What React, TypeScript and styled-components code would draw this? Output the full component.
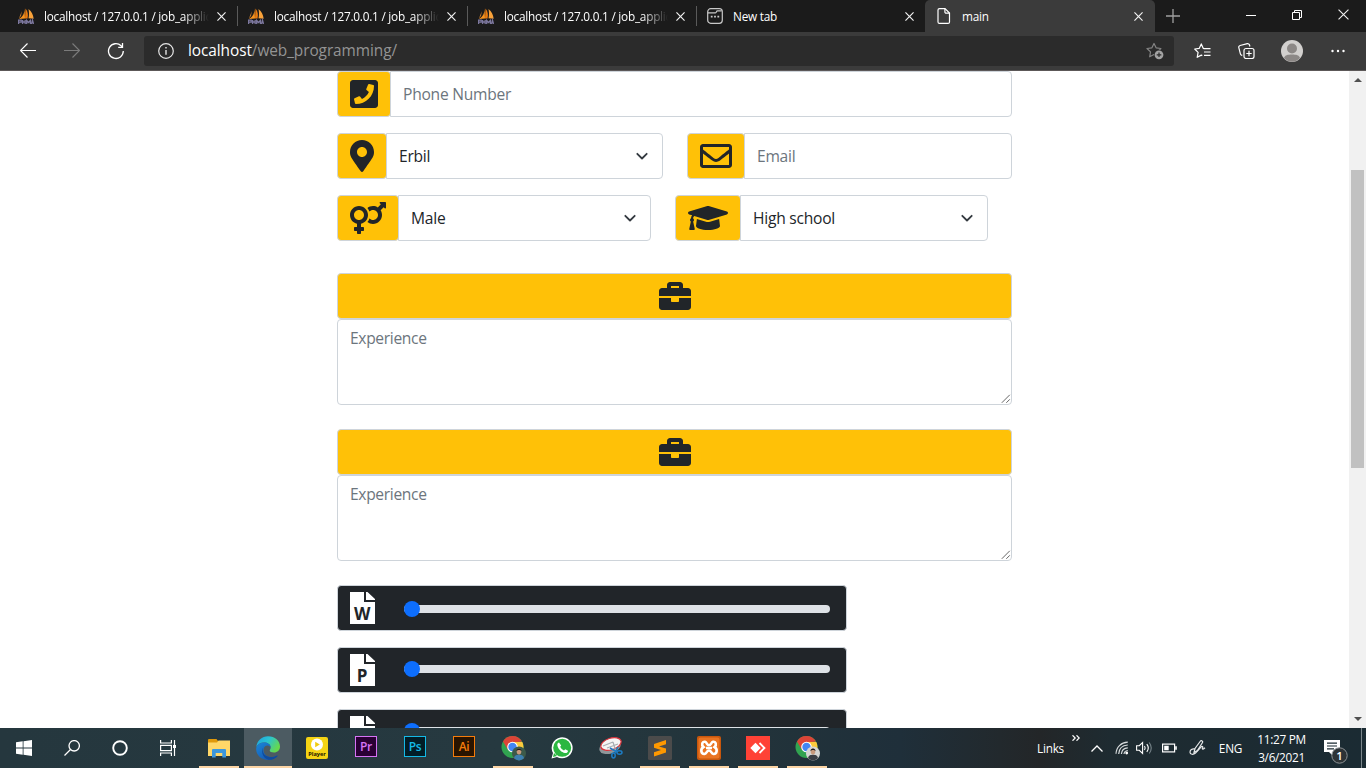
import React from "react";
import styled, { createGlobalStyle } from "styled-components";
import {
  FaPhoneSquare,
  FaMapMarkerAlt,
  FaRegEnvelope,
  FaVenusMars,
  FaGraduationCap,
  FaBriefcase,
} from "react-icons/fa";

const Global = createGlobalStyle`
  * { box-sizing: border-box; }
  html, body { margin: 0; padding: 0; overflow: hidden; background: #fff; }
  body { font-family: "Open Sans", "Noto Sans", sans-serif; color: #212529; }
  svg { display: block; flex: none; }
`;

const Screen = styled.div`
  width: 1366px;
  height: 768px;
  display: flex;
  flex-direction: column;
  overflow: hidden;
`;

/* ---------- browser chrome ---------- */
const TabStrip = styled.div`
  height: 32px;
  flex: none;
  display: flex;
  background: #1b1b1b;
`;

const Tab = styled.div<{ $w: number; $active?: boolean; $sep?: boolean }>`
  width: ${(p) => p.$w}px;
  height: 32px;
  display: flex;
  align-items: center;
  padding: 0 10px 0 ${(p) => (p.$w === 238 ? 18 : p.$active ? 11 : 10)}px;
  background: ${(p) => (p.$active ? "#3b3b3b" : "transparent")};
  border-radius: ${(p) => (p.$active ? "5px 5px 0 0" : "0")};
  color: #fff;
  &::after {
    content: "";
    width: 1px;
    height: 20px;
    margin-right: -10px;
    margin-left: ${(p) => (p.$sep || p.$active ? 11 : 10)}px;
    background: ${(p) => (p.$sep ? "#5a5a5a" : "transparent")};
  }
`;

const TabTitle = styled.span<{ $fade?: boolean }>`
  flex: 1;
  min-width: 0;
  margin-left: 10px;
  margin-right: 8px;
  overflow: hidden;
  white-space: nowrap;
  font-size: 11.8px;
  line-height: 18px;
  letter-spacing: -0.24px;
  ${(p) =>
    p.$fade
      ? "-webkit-mask-image: linear-gradient(to right, #000 calc(100% - 26px), transparent);"
      : ""}
`;

const NewTab = styled.div`
  width: 36px;
  display: flex;
  align-items: center;
  justify-content: center;
`;

const WindowButtons = styled.div`
  margin-left: auto;
  display: flex;
  width: 138px;
`;

const WindowButton = styled.div`
  width: 46px;
  height: 29px;
  display: flex;
  align-items: center;
  justify-content: center;
`;

const Toolbar = styled.div`
  height: 39px;
  flex: none;
  display: flex;
  align-items: center;
  padding: 0 6px;
  background: #3b3b3b;
  border-bottom: 1px solid #5c5858;
`;

const ToolButton = styled.div<{ $w?: number }>`
  width: ${(p) => p.$w ?? 44}px;
  height: 30px;
  display: flex;
  align-items: center;
  justify-content: center;
`;

const AddressBar = styled.div`
  width: 1030px;
  height: 30px;
  margin-left: 6px;
  margin-right: 6px;
  display: flex;
  align-items: center;
  padding: 0 10px 0 14px;
  border-radius: 3px;
  background: #2b2b2b;
`;

const Url = styled.span`
  flex: 1;
  margin-left: 14px;
  font-size: 15.4px;
  line-height: 22px;
  letter-spacing: -0.07px;
  color: #949494;
  b { font-weight: 400; color: #fff; }
`;

/* ---------- page ---------- */
const Viewport = styled.div`
  flex: 1;
  min-height: 0;
  display: flex;
  overflow: hidden;
  background: #fff;
`;

const Page = styled.div`
  flex: 1;
  overflow: hidden;
  padding-left: 337px;
`;

const Form = styled.form`
  width: 675px;
  display: flex;
  flex-direction: column;
  margin: 0;
`;

const FieldRow = styled.div<{ $last?: boolean }>`
  display: flex;
  gap: 24px;
  margin-bottom: ${(p) => (p.$last ? 32 : 16)}px;
`;

const InputGroup = styled.div<{ $w: number }>`
  width: ${(p) => p.$w}px;
  height: 46px;
  display: flex;
`;

const Addon = styled.span<{ $icon: number }>`
  display: flex;
  align-items: center;
  padding: 0 12px;
  background: #ffc107;
  border: 1px solid #ced4da;
  border-radius: 4px;
  color: #212529;
  svg { width: ${(p) => p.$icon}px; height: 32px; }
`;

const Control = styled.div<{ $muted?: boolean }>`
  flex: 1;
  display: flex;
  align-items: center;
  justify-content: space-between;
  margin-left: -1px;
  padding: 0 12px 0 12px;
  border: 1px solid #ced4da;
  border-radius: 0 4px 4px 0;
  font-size: 15.6px;
  line-height: 24px;
  letter-spacing: -0.24px;
  color: ${(p) => (p.$muted ? "#6c757d" : "#212529")};
`;

const Experience = styled.div`
  margin-bottom: 24px;
`;

const ExperienceHead = styled.div`
  height: 46px;
  display: flex;
  align-items: center;
  justify-content: center;
  background: #ffc107;
  border: 1px solid #ced4da;
  border-radius: 4px;
`;

const ExperienceBody = styled.div`
  height: 86px;
  display: flex;
  justify-content: space-between;
  padding: 6px 0 0 12px;
  border: 1px solid #ced4da;
  border-radius: 4px;
  font-size: 15.6px;
  line-height: 24px;
  letter-spacing: -0.34px;
  color: #6c757d;
  svg { align-self: flex-end; }
`;

const SkillBar = styled.div`
  width: 510px;
  height: 46px;
  flex: none;
  margin-bottom: 16px;
  display: flex;
  align-items: flex-start;
  padding: 0 16px 0 12px;
  background: #212529;
  border: 1px solid #ced4da;
  border-radius: 4px;
  > svg { margin-top: 6px; }
`;

const Track = styled.div<{ $top: number }>`
  flex: 1;
  height: 8px;
  margin: ${(p) => p.$top}px 0 0 29px;
  display: flex;
  align-items: center;
  border-radius: 4px;
  background: #dee2e6;
`;

const Thumb = styled.span`
  width: 16px;
  height: 16px;
  flex: none;
  border-radius: 50%;
  background: #0d6efd;
`;

const ScrollBar = styled.div`
  width: 17px;
  display: flex;
  flex-direction: column;
  align-items: center;
  background: #f1f1f1;
`;

const ScrollArrow = styled.div<{ $down?: boolean }>`
  height: 17px;
  width: 17px;
  display: flex;
  align-items: center;
  justify-content: center;
  padding: ${(p) => (p.$down ? "0 0 2px" : "0")};
`;

const ScrollThumb = styled.div`
  width: 13px;
  height: 298px;
  margin-top: 82px;
  margin-bottom: auto;
  background: #c1c1c1;
`;

/* ---------- taskbar ---------- */
const Taskbar = styled.div`
  height: 40px;
  flex: none;
  display: flex;
  align-items: stretch;
  color: #fff;
  background: linear-gradient(90deg, #25373e 0, #263940 500px, #22333a 760px, #1f2f3a 900px, #22292d 1000px, #232628 1040px, #1e2b31 1110px, #1b2b33 1366px);
`;

const Launch = styled.div`
  width: 48px;
  display: flex;
  align-items: center;
  justify-content: center;
`;

const Apps = styled.div`
  display: flex;
  margin-left: 3px;
  gap: 1px;
`;

const AppSlot = styled.div<{ $running?: boolean; $active?: boolean }>`
  width: 48px;
  height: 40px;
  display: flex;
  flex-direction: column;
  align-items: center;
  background: ${(p) => (p.$active ? "#4c5b62" : "transparent")};
  &::after {
    content: "";
    width: ${(p) => (p.$active ? 48 : 40)}px;
    height: 2px;
    background: ${(p) => (p.$running ? "#fcd5a5" : "transparent")};
  }
`;

const AppIcon = styled.div`
  height: 38px;
  display: flex;
  align-items: center;
  padding-top: 2px;
`;

const AdobeTile = styled.div<{ $c: string; $bg: string }>`
  width: 22px;
  height: 21px;
  margin-bottom: 3px;
  display: flex;
  align-items: center;
  justify-content: center;
  border: 1.5px solid ${(p) => p.$c};
  background: ${(p) => p.$bg};
  color: ${(p) => p.$c};
  font: 600 12px/16px "Open Sans", sans-serif;
  letter-spacing: -0.3px;
`;

const PlayerTile = styled.div`
  width: 22px;
  height: 22px;
  display: flex;
  flex-direction: column;
  align-items: center;
  border-radius: 2px;
  background: #f5d414;
  color: #1c1800;
  font: 700 5.6px/7px "Open Sans", sans-serif;
`;

const Tray = styled.div`
  margin-left: auto;
  width: 331px;
  display: flex;
  align-items: center;
  font-size: 11.8px;
  letter-spacing: -0.25px;
`;

const TrayItem = styled.div<{ $w: number; $up?: number; $down?: number }>`
  width: ${(p) => p.$w}px;
  flex: none;
  display: flex;
  justify-content: center;
  white-space: nowrap;
  padding-bottom: ${(p) => p.$up ?? 0}px;
  padding-top: ${(p) => p.$down ?? 0}px;
`;

const Clock = styled.div`
  width: 60px;
  display: flex;
  flex-direction: column;
  align-items: center;
  line-height: 18px;
  letter-spacing: -0.3px;
  white-space: nowrap;
`;

const ShowDesktop = styled.div`
  width: 5px;
  height: 40px;
  margin-left: auto;
  border-left: 1px solid #7b868b;
`;

/* ---------- drawings ---------- */
const Close = ({ s = 9, w = 1.3 }: { s?: number; w?: number }) => (
  <svg width={s} height={s} viewBox="0 0 10 10" stroke="#f2f2f2" strokeWidth={w}>
    <path d="M.5.5l9 9M9.5.5l-9 9" />
  </svg>
);

const Sails = () => (
  <svg width="16" height="16" viewBox="0 0 16 16">
    <path d="M6.500 0C6.700 5 5 8.500 1 11l6-.5z" fill="#f5931f" />
    <path d="M7.500.5c2.500 3 2.800 6 2 10L7 10.500z" fill="#e87b10" />
    <path d="M10.500 1c3.200 2.500 4.500 5.500 5.200 9.700l-5.200-.5C11.200 7 11.200 4.500 10.500 1z" fill="#f9a23a" />
    <path d="M3.800 3L3 8 .8 10.700z" fill="#c47a2c" />
    <path d="M.6 16v-3.800h2.600v2H1M4.600 12v4M4.600 14h2.500M7.200 12v4M8.700 16v-3.500l1.800 2 1.900-2V16M13.500 16l1-3.800 1 3.800" fill="none" stroke="#7d789f" strokeWidth="1.300" />
  </svg>
);

const NewTabIcon = () => (
  <svg width="16" height="16" viewBox="0 0 16 16" fill="none" stroke="#c9c9c9" strokeWidth="1.200">
    <rect x=".7" y=".7" width="14.600" height="14.600" rx="3" />
    <path d="M1 4.800h7.500c1.200 0 .6-2 2-2h4" />
    <path d="M3.800 8.700h1.800M7.100 8.700h1.800M10.400 8.700h1.800" strokeWidth="1.700" />
  </svg>
);

const PageIcon = () => (
  <svg width="16" height="16" viewBox="0 0 16 16" fill="none" stroke="#fff" strokeWidth="1.200">
    <path d="M3.500.6H9L13.500 5v8.900a1.500 1.500 0 0 1-1.500 1.500H3.500A1.500 1.500 0 0 1 2 13.900V2.100A1.500 1.500 0 0 1 3.500.6z" />
    <path d="M8.900.8V4a1.200 1.200 0 0 0 1.200 1.200h3.400" />
  </svg>
);

const Arrow = ({ c, flip }: { c: string; flip?: boolean }) => (
  <svg width="16" height="16" viewBox="0 0 16 16" fill="none" stroke={c} strokeWidth="1.200">
    {flip ? <path d="M0 7.500h15.500M8.500.5l7 7-7 7" /> : <path d="M16 7.500H.5M7.500.5l-7 7 7 7" />}
  </svg>
);

const Refresh = () => (
  <svg width="18" height="18" viewBox="0 0 18 18" fill="none" stroke="#fff" strokeWidth="1.300">
    <path d="M16.300 9a7.400 7.400 0 1 1-2.200-5.200L15.500 5.300" />
    <path d="M15.500 1v4.300h-4.300" />
  </svg>
);

const Info = () => (
  <svg width="16" height="16" viewBox="0 0 16 16" fill="none" stroke="#e6e6e6" strokeWidth="1.200">
    <circle cx="8" cy="8" r="7.300" />
    <path d="M8 7v4.800M8 4v1.600" strokeWidth="1.400" />
  </svg>
);

const StarAdd = () => (
  <svg width="18" height="18" viewBox="0 0 18 18">
    <path d="M8 1.500l2.100 4.300 4.800.7-3.500 3.400.8 4.800L8 12.500l-4.300 2.300.8-4.900L1 6.500l4.900-.7z" fill="none" stroke="#858585" strokeWidth="1.200" strokeLinejoin="round" />
    <circle cx="13" cy="12.800" r="5" fill="#2b2b2b" />
    <circle cx="13" cy="12.800" r="4.400" fill="#a3a3a3" />
    <path d="M13 10.500v4.600M10.700 12.800h4.600" stroke="#2b2b2b" strokeWidth="1.200" />
  </svg>
);

const FavList = () => (
  <svg width="17" height="16" viewBox="0 0 17 16" fill="none" stroke="#fff" strokeWidth="1.200" strokeLinejoin="round">
    <path d="M10.500 5.500l-1.300-.2L7.300.9 5.300 5.300.7 6l3.400 3.400-.9 4.900 4.100-2.200 1 .5" />
    <path d="M9.500 5.700h7M10 9h6.500M10 12.300h6.500" />
  </svg>
);

const Collections = () => (
  <svg width="17" height="16" viewBox="0 0 17 16" fill="none" stroke="#fff" strokeWidth="1.200">
    <rect x="6" y="5.500" width="10" height="10" rx="2" />
    <path d="M11 7.800v5.400M8.300 10.500h5.400" />
    <path d="M4.300 12.300l-.8-.2a1.800 1.800 0 0 1-1.100-1.300L.8 4.700a1.800 1.800 0 0 1 1.300-2.200L9.300.7a1.800 1.800 0 0 1 2.200 1.300l.4 1.500" />
  </svg>
);

const Avatar = () => (
  <svg width="22" height="22" viewBox="0 0 22 22">
    <circle cx="11" cy="11" r="11" fill="#d2d0ce" />
    <circle cx="11" cy="8.500" r="5" fill="#8c8886" />
    <path d="M3 18c1-3 3.500-3.500 8-3.500S18 15 19 18c-2 2.400-4.800 3.700-8 3.700S5 20.400 3 18z" fill="#8c8886" />
  </svg>
);

const Caret = () => (
  <svg width="16" height="16" viewBox="0 0 16 16" fill="none" stroke="#343a40" strokeWidth="1.800" strokeLinecap="round" strokeLinejoin="round">
    <path d="M3.300 5.800L8 10.500l4.700-4.700" />
  </svg>
);

const Grip = () => (
  <svg width="10" height="10" viewBox="0 0 10 10" stroke="#555" strokeWidth=".9">
    <path d="M.8 8.800l8-8M5.300 8.800l3.500-3.500" />
  </svg>
);

const DocIcon = ({ letter }: { letter?: string }) => (
  <svg width="25" height="32" viewBox="0 0 25 32">
    <path d="M0 0h14v10h11v22H0zM16 0h1.500L25 7v1h-9z" fill="#fff" />
    {letter && (
      <text x="12.200" y="28" textAnchor="middle" fontFamily="Open Sans, sans-serif" fontWeight="700" fontSize="17" fill="#212529">
        {letter}
      </text>
    )}
  </svg>
);

const Windows = () => (
  <svg width="16" height="16" viewBox="0 0 16 16" fill="#fff">
    <path d="M0 2.300l6.700-1v6.300H0zM7.500 1.200L16 0v7.600H7.500zM0 8.400h6.700v6.300l-6.700-1zM7.500 8.400H16V16l-8.500-1.200z" />
  </svg>
);

const Search = () => (
  <svg width="16" height="16" viewBox="0 0 16 16" fill="none" stroke="#fff" strokeWidth="1.300">
    <circle cx="10.200" cy="5.800" r="5.200" />
    <path d="M6.500 9.500L.5 15.500" />
  </svg>
);

const TaskView = () => (
  <svg width="17" height="16" viewBox="0 0 17 16" fill="none" stroke="#fff" strokeWidth="1.200">
    <path d="M.6 0v3h10.800V0M.6 16v-3h10.800v3M.6 5.300h10.800v5.400H.6zM14.500 0v16" />
    <path d="M13 5h3v3h-3z" fill="#fff" stroke="none" />
  </svg>
);

const Explorer = () => (
  <svg width="22" height="19" viewBox="0 0 22 19">
    <path d="M0 1A1 1 0 0 1 1 0h7.500l1.500 2v3H0z" fill="#e0990a" />
    <path d="M0 3.500h9L10.500 1.500H22v15.500H0z" fill="#ffd768" />
    <path d="M4 18.500V11a1 1 0 0 1 1-1h12a1 1 0 0 1 1 1v7.500h-3.700V14H7.700v4.500z" fill="#3c97dc" />
  </svg>
);

const Edge = () => (
  <svg width="24" height="24" viewBox="0 0 24 24">
    <defs>
      <linearGradient id="edgeTop" x1="0" y1="0" x2="1" y2=".5">
        <stop offset="0" stopColor="#1c9fe0" />
        <stop offset=".5" stopColor="#2ac3d2" />
        <stop offset="1" stopColor="#65d84e" />
      </linearGradient>
      <linearGradient id="edgeLow" x1="0" y1="0" x2=".8" y2="1">
        <stop offset="0" stopColor="#1a86d8" />
        <stop offset="1" stopColor="#1554ae" />
      </linearGradient>
    </defs>
    <path d="M.3 11C1 4.500 6 .2 12 .2c7 0 12 4.800 12 10.300 0 3.800-2.700 6-6 6-2.700 0-4.300-1-4.300-2 0-.8 1-1.300 1-3 0-3-3-5-6.500-5C4.500 6.500 1.500 8.500.3 11z" fill="url(#edgeTop)" />
    <path d="M.2 12.500C.5 8.800 4 6.500 8.200 6.500c3.500 0 6.500 2 6.500 5-1-1.500-2.300-2-3.500-2-2.500 0-3.700 2.300-3.700 4.700 0 4 3.500 6.800 8 6.800 2.600 0 4.500-.8 6-1.800-2 3-5.300 4.600-9.500 4.600C5.500 23.800-.2 19 .2 12.500z" fill="url(#edgeLow)" />
    <path d="M8 10.500c-2 2-1.500 6.500 1 8.500 3.200 2.600 8.500 2.500 11.500.7.800-.5 1.400 0 1 .5-2 2.500-5.500 3.700-9 3.600C6 22 4.500 14 8 10.500z" fill="#0f4b9e" />
  </svg>
);

const Chrome = ({ shirt, back }: { shirt: string; back: string }) => (
  <svg width="25" height="25" viewBox="0 0 25 25">
    <circle cx="11.500" cy="11" r="11" fill="#31a350" />
    <path d="M2 5.500A11 11 0 0 1 21.100 5.600L11.500 6.500 7 14z" fill="#dc4437" />
    <path d="M11.500 6h9.800A11 11 0 0 1 12.500 22l4-8z" fill="#fdca3d" />
    <circle cx="11.500" cy="11" r="5.300" fill="#fff" />
    <circle cx="11.500" cy="11" r="4.200" fill="#4285f4" />
    <circle cx="18" cy="17.500" r="7" fill={back} />
    <path d="M13 22.300c.5-3 2.500-3.500 5-3.500s4.500.5 5 3.500a7 7 0 0 1-10 0z" fill={shirt} />
    <ellipse cx="18" cy="15.500" rx="2.300" ry="3" fill="#c99a7c" />
    <path d="M15.500 15c-.3-3.500 5.300-3.500 5 0-1-1.500-4-1.500-5 0z" fill="#1d1a1a" />
  </svg>
);

const WhatsAppIcon = () => (
  <svg width="22" height="22" viewBox="0 0 22 22">
    <path d="M.5 21.500L2 16A10.500 10.500 0 1 1 6 20z" fill="#fff" />
    <circle cx="11.200" cy="10.800" r="9" fill="#2bb741" />
    <path d="M2 20l1-4 3 3z" fill="#2bb741" />
    <path d="M8 5.500c-1.500.3-2 2-1.500 3.500 1 3.500 4 6.300 7.500 7 1.500.2 3-.7 3-2.300l-2.700-1.500-1.300 1.300c-1.700-.7-3-2-3.800-3.700l1-1.200z" fill="#fff" />
  </svg>
);

const Snip = () => (
  <svg width="24" height="22" viewBox="0 0 24 22">
    <ellipse cx="11" cy="10" rx="11" ry="6.500" transform="rotate(-18 11 10)" fill="#8f9699" />
    <ellipse cx="12" cy="7" rx="10.500" ry="5.800" transform="rotate(-18 12 7)" fill="#f5f5f5" stroke="#d9343c" strokeWidth="1.200" />
    <path d="M4 9l10-4M8 11l11-4M14 5l3 10" stroke="#a8aeb3" strokeWidth="1.200" />
    <g fill="none" stroke="#1d7cc4" strokeWidth="1.500">
      <path d="M11 11l7 4M19 10l-3 6" />
      <ellipse cx="14.500" cy="18.500" rx="1.700" ry="2.400" />
      <ellipse cx="20.500" cy="15.500" rx="2.500" ry="1.700" />
    </g>
  </svg>
);

const Sublime = () => (
  <svg width="24" height="24" viewBox="0 0 24 24">
    <rect width="24" height="24" rx="1.500" fill="#4b4b4b" />
    <path d="M6 8l12-4v4.200L11 10.400l7 2.200v4L6 20.500v-4.200l7-2.300-7-2.200z" fill="#ff9800" />
  </svg>
);

const Xampp = () => (
  <svg width="24" height="24" viewBox="0 0 24 24">
    <rect width="24" height="24" rx="2" fill="#c9570c" />
    <rect x="1.500" y="1.500" width="21" height="21" rx="2" fill="#ea7422" />
    <path d="M8 5.800c-2.800-.6-4 3-1.500 5.200C3 13 4 18.200 7.500 18c2.500-.2 2-3.500 4.500-3.500s2 3.300 4.500 3.500c3.500.2 4.500-5 1-7C20 8.800 18.800 5.200 16 5.800c-2 .4-1.800 3.500-4 3.500S10 6.200 8 5.800z" fill="none" stroke="#fff" strokeWidth="2.600" />
    <path d="M9 12h6" stroke="#fff" strokeWidth="2.500" />
  </svg>
);

const AnyDesk = () => (
  <svg width="24" height="24" viewBox="0 0 24 24">
    <rect width="24" height="24" fill="#ff4236" />
    <path d="M9.500 6.800l5.200 5.200-5.200 5.200L4.300 12z" fill="#fff" />
    <path d="M13.500 7l5 5-5 5" fill="none" stroke="#fff" strokeWidth="1.800" />
  </svg>
);

const Wifi = () => (
  <svg width="14" height="14" viewBox="0 0 14 14" fill="none" stroke="#d7dbdd" strokeWidth="1.200">
    <path d="M1 12.800C1.300 6 6 1.500 12.800 1.200M3.700 13C4 7.700 7.500 4.300 12.800 4M6.400 13c.3-3.500 2.600-6 6.400-6.200M9 13c.2-2 1.500-3.300 3.800-3.500" />
    <circle cx="11.700" cy="12" r="1.400" fill="#fff" stroke="none" />
  </svg>
);

const Volume = () => (
  <svg width="17" height="14" viewBox="0 0 17 14" fill="none" stroke="#fff" strokeWidth="1.100">
    <path d="M.6 4.700h2.700L6.600 1.500v11L3.300 9.300H.6z" />
    <path d="M8.500 5c.8 1.200.8 2.800 0 4M10.800 3.200c1.800 2.300 1.800 5.300 0 7.600" />
    <path d="M13.200 1.500c2.600 3.500 2.600 7.500 0 11" stroke="#77848a" />
  </svg>
);

const Battery = () => (
  <svg width="15" height="10" viewBox="0 0 15 10">
    <rect x=".6" y="1.100" width="12" height="7.800" fill="none" stroke="#fff" strokeWidth="1.200" />
    <path d="M2.200 2.700h4.500v4.600H2.200zM13.200 3.300h1.600v3.400h-1.600z" fill="#fff" />
  </svg>
);

const Pen = () => (
  <svg width="17" height="16" viewBox="0 0 17 16" fill="none" stroke="#e6e8e9" strokeWidth="1.200">
    <path d="M5 12.500l1-4L11.500 1c.8-1 2.800.3 2 1.500L8.500 10.500z" />
    <path d="M6 9c-3-.5-5 1-5 3.300 0 2.500 3.500 2.500 5.500.7L12 7c1-1.300 2.500-.6 1.500 1-.8 1.300.3 1.700 2.500-.3" />
  </svg>
);

const Notice = () => (
  <svg width="24" height="24" viewBox="0 0 24 24">
    <path d="M0 0h16v12H9v4l-4-4H0z" fill="#fff" />
    <path d="M3 3.200h10M3 6h10M3 8.800h7" stroke="#1b2b33" strokeWidth="1.200" />
    <circle cx="15.500" cy="15.500" r="7.700" fill="#2d3336" stroke="#8c9295" strokeWidth="1" />
    <text x="15.400" y="19.500" textAnchor="middle" fontFamily="Open Sans, sans-serif" fontSize="11.500" fontWeight="600" fill="#fff">1</text>
  </svg>
);

/* ---------- composition ---------- */
const dbTitle = "localhost / 127.0.0.1 / job_application";

type FieldProps = { w: number; icon: React.ReactNode; iconWidth: number; text: string; select?: boolean };

const Field = ({ w, icon, iconWidth, text, select }: FieldProps) => (
  <InputGroup $w={w}>
    <Addon $icon={iconWidth}>{icon}</Addon>
    <Control $muted={!select}>
      {text}
      {select && <Caret />}
    </Control>
  </InputGroup>
);

const ExperienceBlock = () => (
  <Experience>
    <ExperienceHead>
      <FaBriefcase size={32} />
    </ExperienceHead>
    <ExperienceBody>
      Experience
      <Grip />
    </ExperienceBody>
  </Experience>
);

const Skill = ({ letter, top }: { letter?: string; top: number }) => (
  <SkillBar>
    <DocIcon letter={letter} />
    <Track $top={top}>
      <Thumb />
    </Track>
  </SkillBar>
);

export default function App() {
  return (
    <Screen>
      <Global />
      <TabStrip>
        {[238, 230, 229].map((w) => (
          <Tab key={w} $w={w} $sep>
            <Sails />
            <TabTitle $fade>{dbTitle}</TabTitle>
            <Close />
          </Tab>
        ))}
        <Tab $w={228}>
          <NewTabIcon />
          <TabTitle>New tab</TabTitle>
          <Close />
        </Tab>
        <Tab $w={230} $active>
          <PageIcon />
          <TabTitle>main</TabTitle>
          <Close />
        </Tab>
        <NewTab>
          <svg width="14" height="14" viewBox="0 0 14 14" stroke="#a0a0a0" strokeWidth="1.300">
            <path d="M7 0v14M0 7h14" />
          </svg>
        </NewTab>
        <WindowButtons>
          <WindowButton>
            <svg width="10" height="10" viewBox="0 0 10 10"><path d="M0 5h10v1H0z" fill="#fff" /></svg>
          </WindowButton>
          <WindowButton>
            <svg width="10" height="10" viewBox="0 0 10 10" fill="none" stroke="#fff"><path d="M.5 2.500h7v7h-7zM2.500 2.500v-2h7v7h-2" /></svg>
          </WindowButton>
          <WindowButton>
            <Close s={11} w={1} />
          </WindowButton>
        </WindowButtons>
      </TabStrip>
      <Toolbar>
        <ToolButton><Arrow c="#fff" /></ToolButton>
        <ToolButton><Arrow c="#7b7b7b" flip /></ToolButton>
        <ToolButton><Refresh /></ToolButton>
        <AddressBar>
          <Info />
          <Url><b>localhost</b>/web_programming/</Url>
          <StarAdd />
        </AddressBar>
        <ToolButton><FavList /></ToolButton>
        <ToolButton><Collections /></ToolButton>
        <ToolButton $w={48}><Avatar /></ToolButton>
        <ToolButton>
          <svg width="14" height="4" viewBox="0 0 14 4" fill="#fff">
            <circle cx="1.500" cy="2" r="1.200" /><circle cx="7" cy="2" r="1.200" /><circle cx="12.500" cy="2" r="1.200" />
          </svg>
        </ToolButton>
      </Toolbar>

      <Viewport>
        <Page>
          <Form>
            <FieldRow>
              <Field w={675} icon={<FaPhoneSquare />} iconWidth={28} text="Phone Number" />
            </FieldRow>
            <FieldRow>
              <Field w={326} icon={<FaMapMarkerAlt />} iconWidth={24} text="Erbil" select />
              <Field w={325} icon={<FaRegEnvelope />} iconWidth={32} text="Email" />
            </FieldRow>
            <FieldRow $last>
              <Field w={314} icon={<FaVenusMars />} iconWidth={36} text="Male" select />
              <Field w={313} icon={<FaGraduationCap />} iconWidth={40} text="High school" select />
            </FieldRow>
            <ExperienceBlock />
            <ExperienceBlock />
            <Skill letter="W" top={19} />
            <Skill letter="P" top={17} />
            <Skill top={17} />
          </Form>
        </Page>
        <ScrollBar>
          <ScrollArrow>
            <svg width="8" height="4" viewBox="0 0 8 4"><path d="M0 4l4-4 4 4z" fill="#505050" /></svg>
          </ScrollArrow>
          <ScrollThumb />
          <ScrollArrow $down>
            <svg width="8" height="4" viewBox="0 0 8 4"><path d="M0 0l4 4 4-4z" fill="#505050" /></svg>
          </ScrollArrow>
        </ScrollBar>
      </Viewport>

      <Taskbar>
        <Launch><Windows /></Launch>
        <Launch><Search /></Launch>
        <Launch>
          <svg width="16" height="16" viewBox="0 0 16 16"><circle cx="8" cy="8" r="6.800" fill="none" stroke="#fff" strokeWidth="1.900" /></svg>
        </Launch>
        <Launch><TaskView /></Launch>
        <Apps>
          <AppSlot $running><AppIcon><Explorer /></AppIcon></AppSlot>
          <AppSlot $running $active><AppIcon><Edge /></AppIcon></AppSlot>
          <AppSlot>
            <AppIcon>
              <PlayerTile>
                <svg width="14" height="14" viewBox="0 0 14 14">
                  <circle cx="7" cy="7.500" r="6" fill="#fff" />
                  <path d="M5.200 4.800l4.600 2.700-4.600 2.700z" fill="#f0cc10" />
                </svg>
                Player
              </PlayerTile>
            </AppIcon>
          </AppSlot>
          <AppSlot><AppIcon><AdobeTile $c="#d673f5" $bg="#2a0035">Pr</AdobeTile></AppIcon></AppSlot>
          <AppSlot><AppIcon><AdobeTile $c="#14b9e6" $bg="#021d27">Ps</AdobeTile></AppIcon></AppSlot>
          <AppSlot><AppIcon><AdobeTile $c="#f57c0b" $bg="#2a1400">Ai</AdobeTile></AppIcon></AppSlot>
          <AppSlot $running><AppIcon><Chrome shirt="#3d7fb0" back="#3c5a4a" /></AppIcon></AppSlot>
          <AppSlot><AppIcon><WhatsAppIcon /></AppIcon></AppSlot>
          <AppSlot><AppIcon><Snip /></AppIcon></AppSlot>
          <AppSlot $running><AppIcon><Sublime /></AppIcon></AppSlot>
          <AppSlot $running><AppIcon><Xampp /></AppIcon></AppSlot>
          <AppSlot $running><AppIcon><AnyDesk /></AppIcon></AppSlot>
          <AppSlot $running><AppIcon><Chrome shirt="#3b3f45" back="#d5d5d3" /></AppIcon></AppSlot>
        </Apps>
        <Tray>
          <TrayItem $w={31}>Links</TrayItem>
          <TrayItem $w={20} $up={21}>
            <svg width="8" height="6" viewBox="0 0 8 6" fill="none" stroke="#fff" strokeWidth="1.200"><path d="M.5.3L3.200 3 .5 5.700M4.500.3L7.200 3 4.500 5.700" /></svg>
          </TrayItem>
          <TrayItem $w={22}>
            <svg width="12" height="7" viewBox="0 0 12 7" fill="none" stroke="#fff" strokeWidth="1.300"><path d="M.5 6.500L6 1l5.500 5.500" /></svg>
          </TrayItem>
          <TrayItem $w={27}><Wifi /></TrayItem>
          <TrayItem $w={19}><Volume /></TrayItem>
          <TrayItem $w={31}><Battery /></TrayItem>
          <TrayItem $w={24}><Pen /></TrayItem>
          <TrayItem $w={43}>ENG</TrayItem>
          <Clock>
            <span>11:27 PM</span>
            <span>3/6/2021</span>
          </Clock>
          <TrayItem $w={50} $down={7}><Notice /></TrayItem>
          <ShowDesktop />
        </Tray>
      </Taskbar>
    </Screen>
  );
}
